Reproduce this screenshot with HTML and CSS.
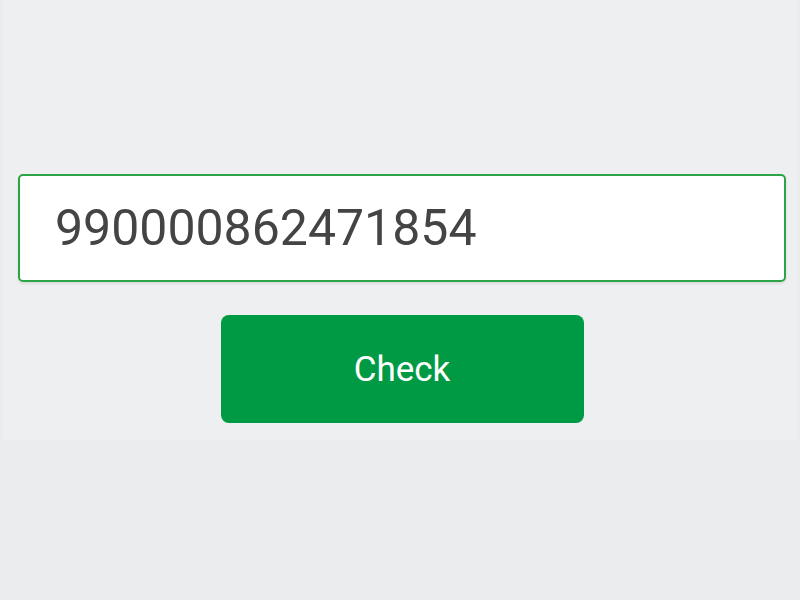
FILE: index.html
```html
<!doctype html>
<html lang="en">

<head>
    <meta charset="UTF-8">
    <meta name="viewport" content="width=device-width, initial-scale=1.0">
    <title>Check</title>
    <link rel="stylesheet" href="styles.css">
</head>

<body>
    <section class="check--panel">
        <input class="check--input" type="text" value="990000862471854">
        <button class="check--button">Check</button>
    </section>
</body>

</html>
```

FILE: styles.css
```css
body {
    margin: 0;
    background-color: #ebecee;
    font-family: Roboto, "Noto Sans", sans-serif;
}

.check--panel {
    display: flex;
    flex-direction: column;
    align-items: center;
    gap: 33px;
    height: 440px;
    box-sizing: border-box;
    margin: 0 3px;
    padding: 174px 11px 0 15px;
    background-color: #eeeff1;
}

.check--input {
    align-self: stretch;
    height: 108px;
    box-sizing: border-box;
    padding: 0 35px;
    border: 2px solid #2ba445;
    border-radius: 5px;
    background-color: #ffffff;
    box-shadow: 0 2px 3px rgba(0, 0, 0, 0.08);
    font-family: Roboto, sans-serif;
    font-size: 50px;
    color: #444444;
    outline: none;
}

.check--button {
    width: 363px;
    height: 108px;
    border: none;
    border-radius: 8px;
    background-color: #009a44;
    color: #ffffff;
    font-family: Roboto, sans-serif;
    font-size: 35px;
    font-weight: 400;
    cursor: pointer;
}
```
